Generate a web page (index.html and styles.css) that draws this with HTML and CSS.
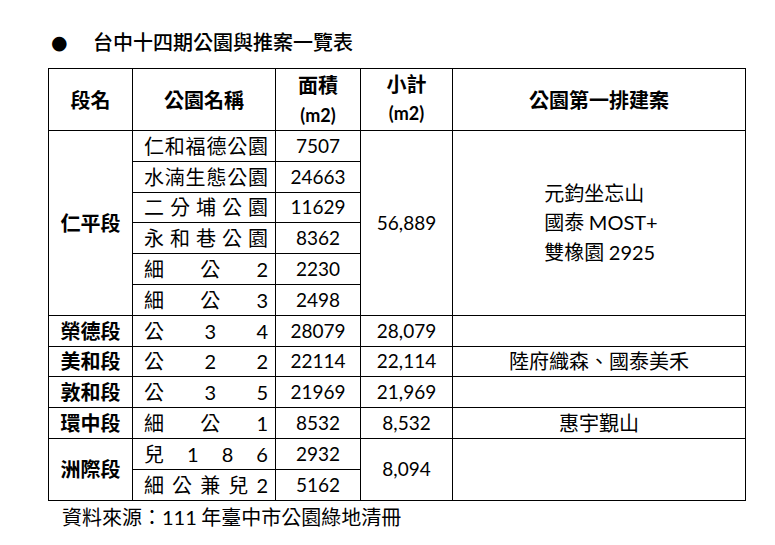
FILE: index.html
```html
<!DOCTYPE html>
<html lang="zh-Hant">
<head>
<meta charset="utf-8">
<title>台中十四期公園與推案一覽表</title>
<link rel="stylesheet" href="styles.css">
</head>
<body>
<div class="page">
  <h1 class="title"><span class="bullet">●</span><span class="title-text">台中十四期公園與推案一覽表</span></h1>
  <table class="parks">
    <colgroup>
      <col class="c1"><col class="c2"><col class="c3"><col class="c4"><col class="c5">
    </colgroup>
    <thead>
      <tr class="head">
        <th>段名</th>
        <th>公園名稱</th>
        <th class="two"><span>面積</span><span class="unit">(m2)</span></th>
        <th class="two up"><span>小計</span><span class="unit">(m2)</span></th>
        <th>公園第一排建案</th>
      </tr>
    </thead>
    <tbody>
      <tr>
        <td class="sec" rowspan="6">仁平段</td>
        <td class="name"><div class="dist"><span>仁</span><span>和</span><span>福</span><span>德</span><span>公</span><span>園</span></div></td>
        <td class="num">7507</td>
        <td class="num" rowspan="6">56,889</td>
        <td class="proj" rowspan="6"><div class="lines"><div>元鈞坐忘山</div><div>國泰 <span class="lat">MOST+</span></div><div>雙橡園 <span class="lat">2925</span></div></div></td>
      </tr>
      <tr>
        <td class="name"><div class="dist"><span>水</span><span>湳</span><span>生</span><span>態</span><span>公</span><span>園</span></div></td>
        <td class="num">24663</td>
      </tr>
      <tr>
        <td class="name"><div class="dist"><span>二</span><span>分</span><span>埔</span><span>公</span><span>園</span></div></td>
        <td class="num">11629</td>
      </tr>
      <tr>
        <td class="name"><div class="dist"><span>永</span><span>和</span><span>巷</span><span>公</span><span>園</span></div></td>
        <td class="num">8362</td>
      </tr>
      <tr>
        <td class="name"><div class="dist"><span>細</span><span>公</span><span class="lat">2</span></div></td>
        <td class="num">2230</td>
      </tr>
      <tr>
        <td class="name"><div class="dist"><span>細</span><span>公</span><span class="lat">3</span></div></td>
        <td class="num">2498</td>
      </tr>
      <tr>
        <td class="sec">榮德段</td>
        <td class="name"><div class="dist"><span>公</span><span class="lat">3</span><span class="lat">4</span></div></td>
        <td class="num">28079</td>
        <td class="num">28,079</td>
        <td class="proj"></td>
      </tr>
      <tr>
        <td class="sec">美和段</td>
        <td class="name"><div class="dist"><span>公</span><span class="lat">2</span><span class="lat">2</span></div></td>
        <td class="num">22114</td>
        <td class="num">22,114</td>
        <td class="proj">陸府織森、國泰美禾</td>
      </tr>
      <tr>
        <td class="sec">敦和段</td>
        <td class="name"><div class="dist"><span>公</span><span class="lat">3</span><span class="lat">5</span></div></td>
        <td class="num">21969</td>
        <td class="num">21,969</td>
        <td class="proj"></td>
      </tr>
      <tr>
        <td class="sec">環中段</td>
        <td class="name"><div class="dist"><span>細</span><span>公</span><span class="lat">1</span></div></td>
        <td class="num">8532</td>
        <td class="num">8,532</td>
        <td class="proj">惠宇覲山</td>
      </tr>
      <tr>
        <td class="sec" rowspan="2">洲際段</td>
        <td class="name"><div class="dist"><span>兒</span><span class="lat">1</span><span class="lat">8</span><span class="lat">6</span></div></td>
        <td class="num">2932</td>
        <td class="num" rowspan="2">8,094</td>
        <td class="proj" rowspan="2"></td>
      </tr>
      <tr>
        <td class="name"><div class="dist"><span>細</span><span>公</span><span>兼</span><span>兒</span><span class="lat">2</span></div></td>
        <td class="num">5162</td>
      </tr>
    </tbody>
  </table>
  <p class="source">資料來源：<span class="lat">111</span> 年臺中市公園綠地清冊</p>
</div>
</body>
</html>
```
FILE: styles.css
```css
html, body {
  margin: 0;
  padding: 0;
  background: #ffffff;
  color: #000000;
}

body {
  font-family: "Noto Sans CJK TC", "Noto Sans CJK SC", sans-serif;
}

.page {
  width: 775px;
  height: 545px;
  overflow: hidden;
}

.title {
  margin: 0;
  padding: 27px 0 0 51px;
  height: 30px;
  line-height: 30px;
  font-size: 20px;
  font-weight: 500;
  display: flex;
  align-items: center;
}

.bullet {
  font-family: "DejaVu Sans", sans-serif;
  font-size: 19px;
  width: 42px;
}

.parks {
  margin: 11px 0 0 48px;
  border-collapse: collapse;
  table-layout: fixed;
  width: 697px;
}

.c1 { width: 84px; }
.c2 { width: 143px; }
.c3 { width: 85px; }
.c4 { width: 92px; }
.c5 { width: 293px; }

.parks th,
.parks td {
  border: 1px solid #000000;
  padding: 0;
  text-align: center;
  vertical-align: middle;
  font-size: 20px;
  line-height: 24px;
}

.parks tbody tr {
  height: 30.8px;
}

.head {
  height: 62px;
}

.parks th {
  font-weight: bold;
}

.two span {
  display: block;
  line-height: 30px;
}

.up span:first-child {
  line-height: 27px;
}

.up .unit {
  line-height: 33px;
}

.unit {
  font-family: "Lato", "Noto Sans CJK TC", sans-serif;
  font-size: 18px;
  font-weight: bold;
}

.sec {
  font-weight: bold;
}

.name {
  padding: 0 7px 0 11px !important;
}

.dist {
  display: flex;
  justify-content: space-between;
  align-items: center;
}

.num,
.lat {
  font-family: "Lato", "Noto Sans CJK TC", sans-serif;
}

.num {
  font-size: 19px !important;
}

.proj .lines {
  display: inline-block;
  text-align: left;
  line-height: 29px;
  padding-left: 4px;
}

.source {
  margin: 1px 0 0 62px;
  font-size: 20px;
  line-height: 30px;
}
```
